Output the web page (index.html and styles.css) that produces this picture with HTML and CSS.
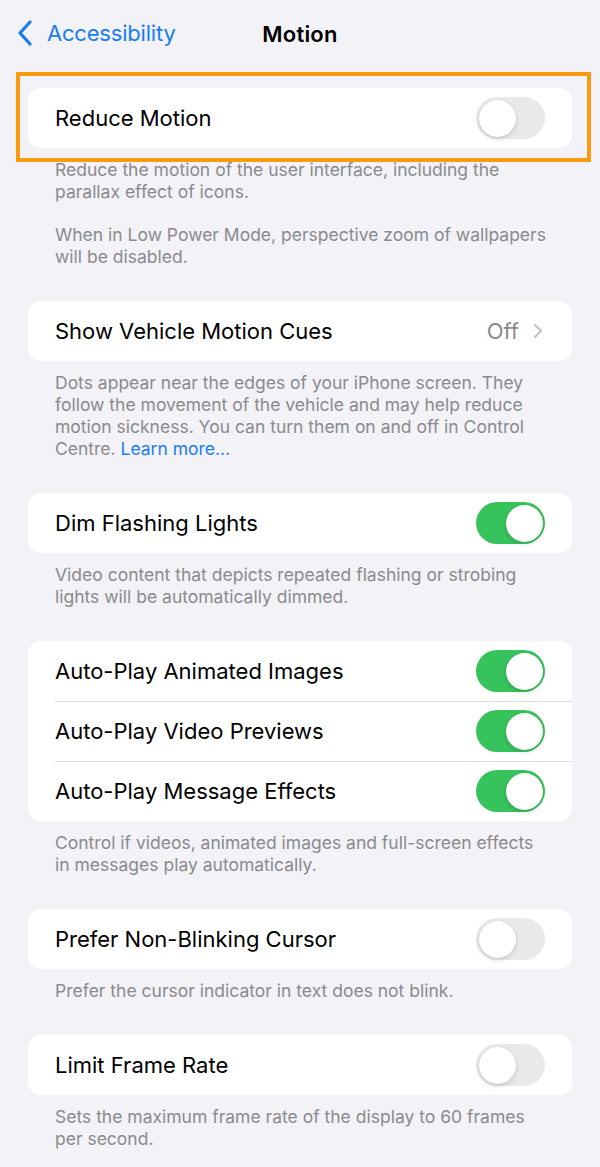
FILE: index.html
```html
<!DOCTYPE html>
<html lang="en">
<head>
<meta charset="utf-8">
<title>Motion</title>
<link rel="stylesheet" href="styles.css">
</head>
<body>
<header class="nav">
  <a class="back">
    <svg class="back-icon" width="16" height="26" viewBox="0 0 16 26"><path d="M13 2 L3 13 L13 24" fill="none" stroke="#1b7cf2" stroke-width="3.2" stroke-linecap="round" stroke-linejoin="round"/></svg>
    <span>Accessibility</span>
  </a>
  <h1 class="title">Motion</h1>
</header>
<main class="content">
  <section class="group highlighted">
    <div class="card">
      <div class="row"><span class="label">Reduce Motion</span><span class="toggle"></span></div>
    </div>
    <div class="highlight"></div>
    <p class="footer">Reduce the motion of the user interface, including the parallax effect of icons.</p>
    <p class="footer para">When in Low Power Mode, perspective zoom of wallpapers will be disabled.</p>
  </section>
  <section class="group">
    <div class="card">
      <div class="row"><span class="label">Show Vehicle Motion Cues</span><span class="detail">Off<svg class="chev" width="10" height="16" viewBox="0 0 10 16"><path d="M2 2 L8 8 L2 14" fill="none" stroke="#c4c4c7" stroke-width="2.2" stroke-linecap="round" stroke-linejoin="round"/></svg></span></div>
    </div>
    <p class="footer">Dots appear near the edges of your iPhone screen. They follow the movement of the vehicle and may help reduce motion sickness. You can turn them on and off in Control Centre. <a class="link">Learn more…</a></p>
  </section>
  <section class="group">
    <div class="card">
      <div class="row"><span class="label">Dim Flashing Lights</span><span class="toggle on"></span></div>
    </div>
    <p class="footer">Video content that depicts repeated flashing or strobing lights will be automatically dimmed.</p>
  </section>
  <section class="group">
    <div class="card">
      <div class="row"><span class="label">Auto-Play Animated Images</span><span class="toggle on"></span></div>
      <div class="row"><span class="label">Auto-Play Video Previews</span><span class="toggle on"></span></div>
      <div class="row"><span class="label">Auto-Play Message Effects</span><span class="toggle on"></span></div>
    </div>
    <p class="footer">Control if videos, animated images and full-screen effects in messages play automatically.</p>
  </section>
  <section class="group">
    <div class="card">
      <div class="row"><span class="label">Prefer Non-Blinking Cursor</span><span class="toggle"></span></div>
    </div>
    <p class="footer">Prefer the cursor indicator in text does not blink.</p>
  </section>
  <section class="group">
    <div class="card">
      <div class="row"><span class="label">Limit Frame Rate</span><span class="toggle"></span></div>
    </div>
    <p class="footer">Sets the maximum frame rate of the display to 60 frames per second.</p>
  </section>
</main>
</body>
</html>
```
FILE: styles.css
```css
* { box-sizing: border-box; }
html, body {
  margin: 0;
  padding: 0;
  background: #f2f2f7;
  font-family: Inter, "Noto Sans", "Liberation Sans", sans-serif;
  -webkit-font-smoothing: antialiased;
}
.nav {
  height: 68px;
  display: flex;
  align-items: center;
  justify-content: center;
  position: relative;
}
.back {
  position: absolute;
  left: 17px;
  top: 20px;
  display: flex;
  align-items: center;
  gap: 14px;
  color: #1b7cf2;
  font-size: 22px;
  letter-spacing: -0.2px;
}
.back-icon { display: block; }
.title {
  margin: 0;
  font-size: 22px;
  font-weight: 600;
  letter-spacing: 0.2px;
  color: #000;
}
.content {
  padding: 20px 28px 0 28px;
}
.group {
  position: relative;
  margin-bottom: 33px;
}
.card {
  background: #fff;
  border-radius: 13px;
  overflow: hidden;
}
.row {
  height: 60px;
  display: flex;
  align-items: center;
  justify-content: space-between;
  padding: 0 27px 0 27px;
  position: relative;
}
.row + .row::before {
  content: "";
  position: absolute;
  left: 27px;
  right: 0;
  top: 0;
  height: 1px;
  background: #dcdce0;
}
.label {
  font-size: 22px;
  color: #000;
}
.detail {
  display: flex;
  align-items: center;
  gap: 14px;
  font-size: 22px;
  color: #8a8a8e;
  padding-right: 2px;
}
.chev { display: block; }
.toggle {
  width: 69px;
  height: 42px;
  border-radius: 21px;
  background: #e9e9eb;
  position: relative;
  flex: none;
}
.toggle::after {
  content: "";
  position: absolute;
  top: 2.5px;
  left: 2.5px;
  width: 37px;
  height: 37px;
  border-radius: 50%;
  background: #fff;
  box-shadow: 0 2px 5px rgba(0,0,0,0.15), 0 0 1px rgba(0,0,0,0.1);
}
.toggle.on { background: #37c35b; }
.toggle.on::after { left: 29.5px; }
.footer {
  margin: 11px 0 0 0;
  padding: 0 22px 0 27px;
  font-size: 17.5px;
  line-height: 22px;
  color: #8a8a8e;
}
.footer.para { margin-top: 21px; }
.link { color: #1b7cf2; }
.highlight {
  position: absolute;
  left: -12px;
  right: -19px;
  top: -16px;
  height: 90px;
  border: 4px solid #fa9a10;
  pointer-events: none;
}
```
